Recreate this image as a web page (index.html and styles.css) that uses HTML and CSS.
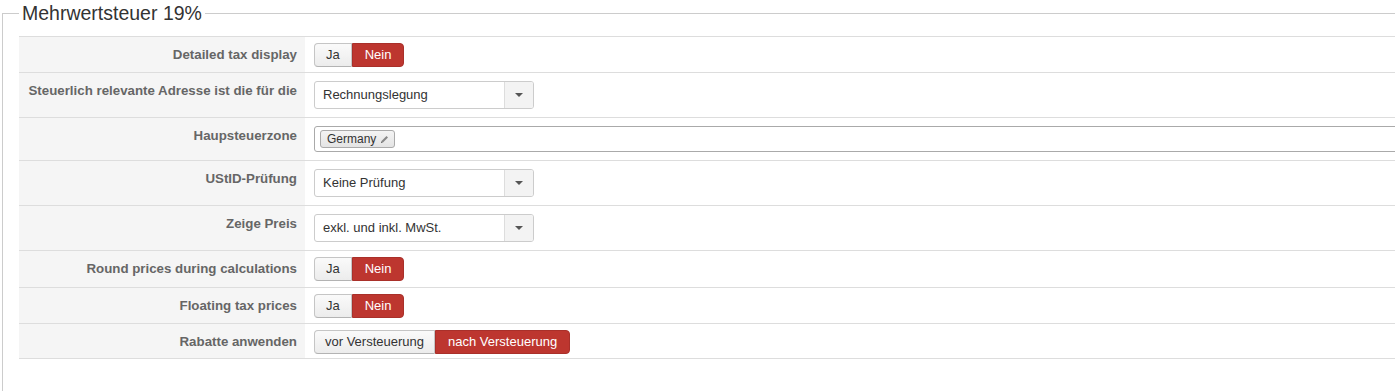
FILE: index.html
```html
<!DOCTYPE html>
<html lang="de">
<head>
    <meta charset="UTF-8">
    <title>Mehrwertsteuer 19%</title>
    <link rel="stylesheet" href="styles.css">
</head>
<body>
    <fieldset class="taxrule">
        <legend>Mehrwertsteuer 19%</legend>

        <table class="admintable">
            <tr>
                <td class="key">Detailed tax display</td>
                <td class="ctrl">
                    <div class="btn-group">
                        <span class="btn">Ja</span><span class="btn active">Nein</span>
                    </div>
                </td>
            </tr>
            <tr>
                <td class="key">Steuerlich relevante Adresse ist die für die</td>
                <td class="ctrl">
                    <div class="chzn-single">
                        <span class="chzn-text">Rechnungslegung</span>
                        <span class="chzn-arrow"><b></b></span>
                    </div>
                </td>
            </tr>
            <tr>
                <td class="key">Haupsteuerzone</td>
                <td class="ctrl">
                    <div class="chzn-multi">
                        <span class="chzn-tag">Germany
                            <svg width="9" height="9" viewBox="0 0 9 9"><path d="M1 8 L1.5 6 L6.5 1 L8 2.5 L3 7.5 Z" fill="#888"/><path d="M1 8 L2.2 7.6 L1.4 6.8 Z" fill="#555"/></svg>
                        </span>
                    </div>
                </td>
            </tr>
            <tr>
                <td class="key">UStID-Prüfung</td>
                <td class="ctrl">
                    <div class="chzn-single">
                        <span class="chzn-text">Keine Prüfung</span>
                        <span class="chzn-arrow"><b></b></span>
                    </div>
                </td>
            </tr>
            <tr>
                <td class="key">Zeige Preis</td>
                <td class="ctrl">
                    <div class="chzn-single">
                        <span class="chzn-text">exkl. und inkl. MwSt.</span>
                        <span class="chzn-arrow"><b></b></span>
                    </div>
                </td>
            </tr>
            <tr>
                <td class="key">Round prices during calculations</td>
                <td class="ctrl tall">
                    <div class="btn-group">
                        <span class="btn">Ja</span><span class="btn active">Nein</span>
                    </div>
                </td>
            </tr>
            <tr>
                <td class="key">Floating tax prices</td>
                <td class="ctrl">
                    <div class="btn-group">
                        <span class="btn">Ja</span><span class="btn active">Nein</span>
                    </div>
                </td>
            </tr>
            <tr class="last">
                <td class="key">Rabatte anwenden</td>
                <td class="ctrl short">
                    <div class="btn-group">
                        <span class="btn wide">vor Versteuerung</span><span class="btn wide active">nach Versteuerung</span>
                    </div>
                </td>
            </tr>
        </table>
    </fieldset>
</body>
</html>
```

FILE: styles.css
```css
html {
    overflow: hidden;
}
body {
    margin: 0;
    font-family: "Liberation Sans", Arial, sans-serif;
    font-size: 13px;
    color: #333;
    background: #fff;
}
.taxrule {
    margin: 0 0 0 2px;
    width: 1480px;
    border: 1px solid #ccc;
    padding: 0 17px 50px 16px;
}
.taxrule legend {
    font-size: 19.5px;
    line-height: 26px;
    padding: 0 3px;
    color: #333;
}
.admintable {
    margin-top: 10px;
    width: 100%;
    border-collapse: collapse;
    table-layout: fixed;
}
.admintable td {
    border-top: 1px solid #ddd;
}
.admintable tr.last td {
    border-bottom: 1px solid #ddd;
}
td.key {
    width: 270px;
    background: #f5f5f5;
    color: #666;
    font-size: 13.3px;
    font-weight: bold;
    text-align: right;
    vertical-align: top;
    white-space: nowrap;
    line-height: 14px;
    padding: 11px 8px 0 8px;
}
td.ctrl {
    padding: 6px 9px 5px;
    vertical-align: top;
}
td.ctrl.tall {
    padding-bottom: 6px;
}
td.ctrl.short {
    padding-bottom: 4px;
}

/* yes/no toggles */
.btn-group {
    display: inline-flex;
}
.btn {
    display: inline-block;
    line-height: 18px;
    padding: 2px 11px;
    border: 1px solid #c5c5c5;
    border-bottom-color: #b3b3b3;
    background: linear-gradient(#fafafa, #ececec);
    color: #333;
}
.btn:first-child {
    border-radius: 4px 0 0 4px;
}
.btn:last-child {
    border-radius: 0 4px 4px 0;
}
.btn.active {
    padding: 2px 12px;
    background: #bd362f;
    border-color: #a9302a;
    color: #fff;
}
.btn.wide {
    padding: 2px 10px;
}
.btn.wide.active {
    padding: 2px 12px;
}

/* single select */
.chzn-single {
    display: flex;
    width: 220px;
    height: 28px;
    margin: 2px 0 3px;
    box-sizing: border-box;
    border: 1px solid #ccc;
    border-radius: 3px;
    background: #fff;
    overflow: hidden;
}
.chzn-text {
    flex: 1;
    line-height: 26px;
    padding-left: 8px;
}
.chzn-arrow {
    width: 28px;
    border-left: 1px solid #ddd;
    background: #f3f3f3;
    display: flex;
    align-items: center;
    justify-content: center;
}
.chzn-arrow b {
    width: 0;
    height: 0;
    border-left: 4px solid transparent;
    border-right: 4px solid transparent;
    border-top: 4px solid #555;
}

/* multi select */
.chzn-multi {
    height: 26px;
    margin: 2px 0 3px;
    box-sizing: border-box;
    border: 1px solid #aaa;
    border-radius: 3px;
    padding: 3px 5px;
}
.chzn-tag {
    display: inline-flex;
    align-items: center;
    gap: 4px;
    height: 18px;
    box-sizing: border-box;
    padding: 0 5px 0 6px;
    border: 1px solid #aaa;
    border-radius: 3px;
    background: linear-gradient(#f4f4f4, #e4e4e4);
    font-size: 12px;
    color: #333;
}
```
